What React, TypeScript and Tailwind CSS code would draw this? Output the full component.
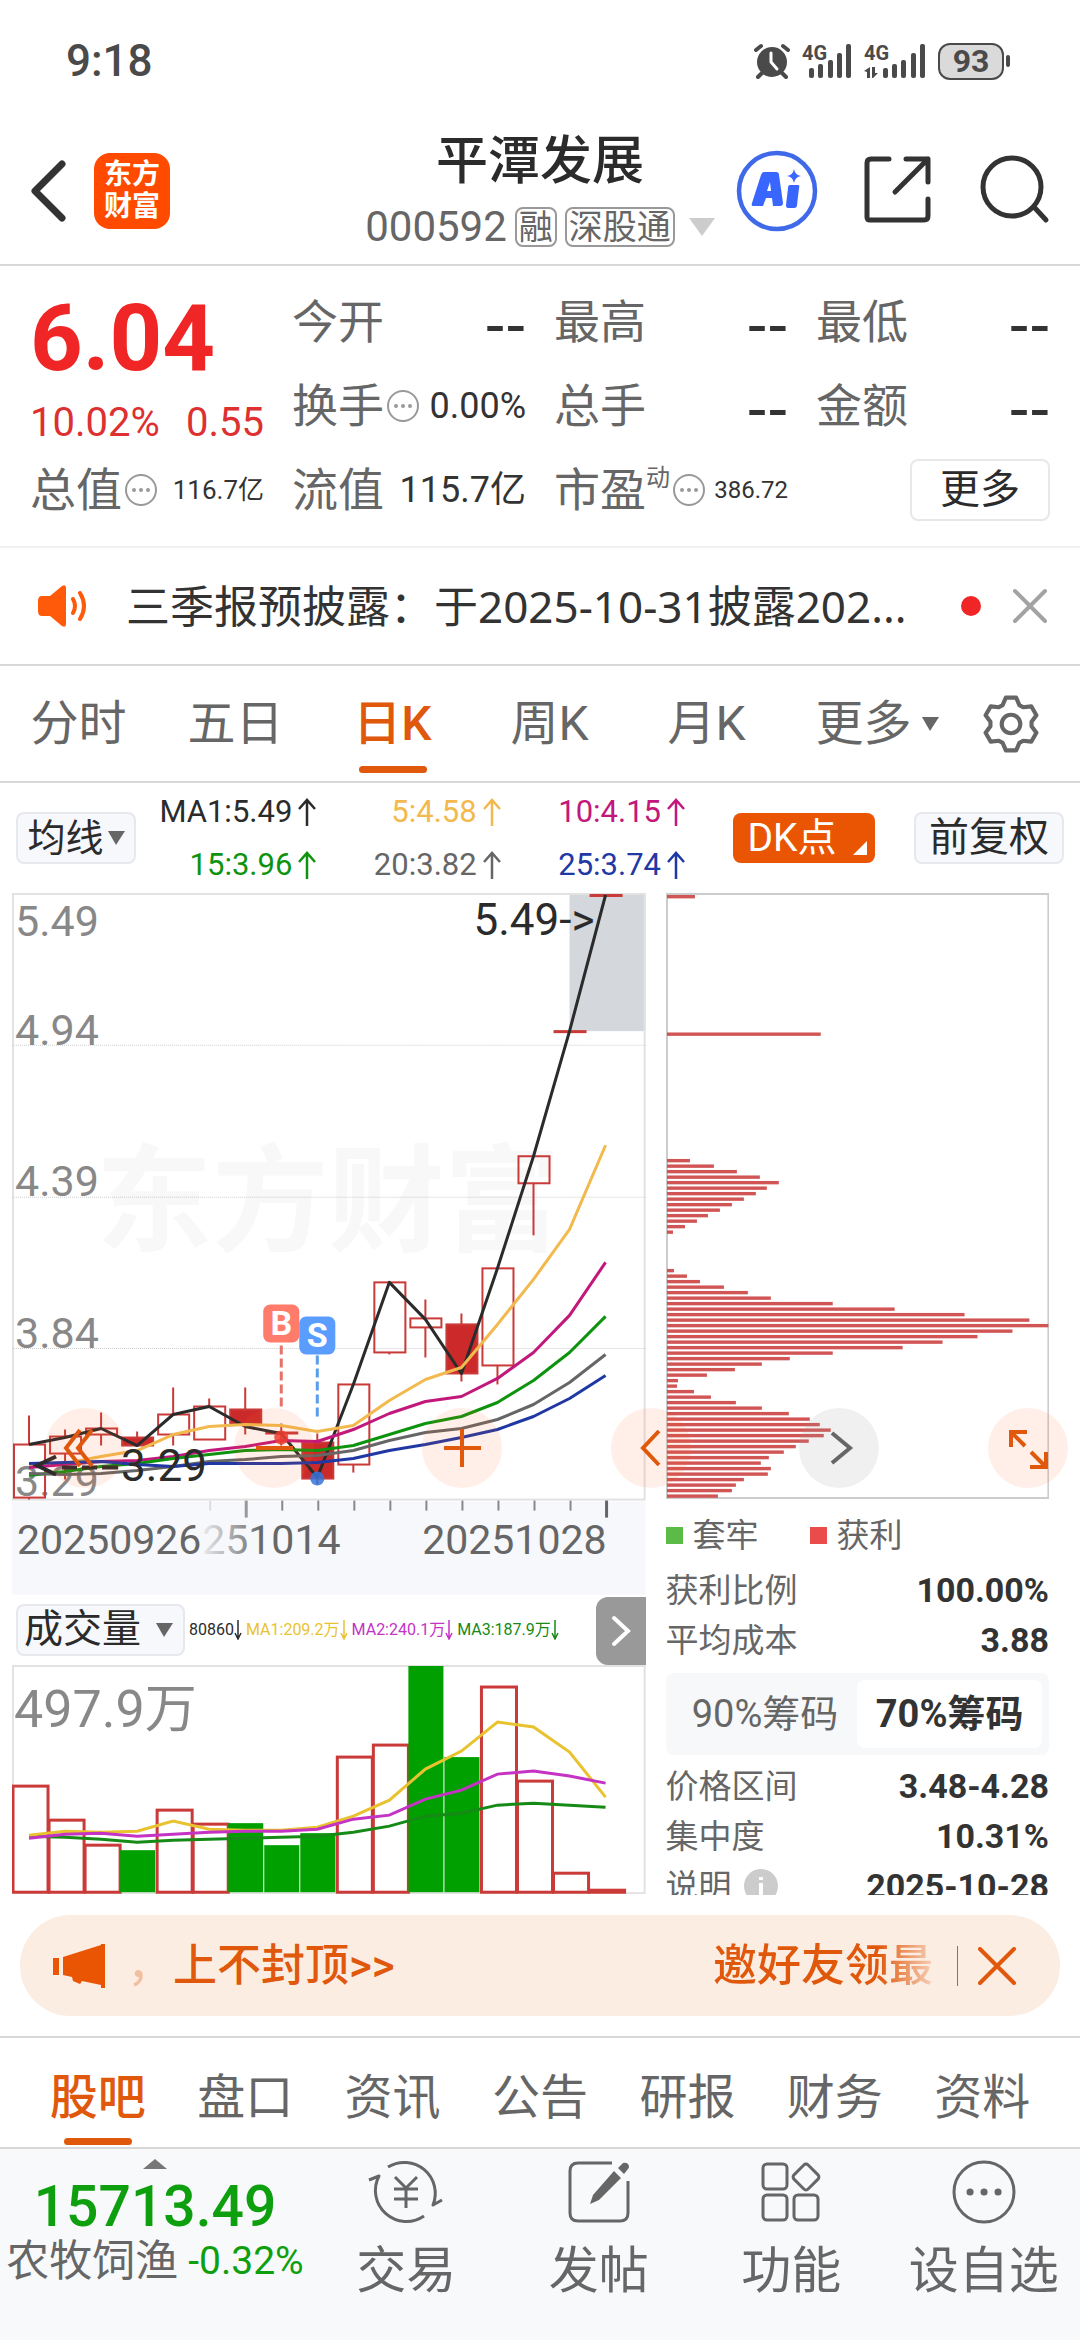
import { ReactNode } from 'react'

const ORANGE = '#ea5504'
const RED = '#c93a38'
const GREEN = '#00a000'

const STEP = 36
const FIRST_X = 29

type Candle = { high: number; top: number; bottom: number; low: number; solid?: boolean }

const candles: Candle[] = [
  { high: 1415, top: 1444, bottom: 1497, low: 1499 },
  { high: 1429, top: 1436, bottom: 1453, low: 1479 },
  { high: 1412, top: 1428, bottom: 1434, low: 1445 },
  { high: 1431, top: 1437, bottom: 1445, low: 1445, solid: true },
  { high: 1387, top: 1414, bottom: 1434, low: 1445 },
  { high: 1398, top: 1406, bottom: 1439, low: 1439 },
  { high: 1387, top: 1409, bottom: 1424, low: 1434, solid: true },
  { high: 1423, top: 1432, bottom: 1433, low: 1445, solid: true },
  { high: 1433, top: 1442, bottom: 1478, low: 1484, solid: true },
  { high: 1384, top: 1384, bottom: 1464, low: 1472 },
  { high: 1282, top: 1282, bottom: 1352, low: 1354 },
  { high: 1299, top: 1318, bottom: 1327, low: 1357 },
  { high: 1313, top: 1324, bottom: 1373, low: 1381, solid: true },
  { high: 1268, top: 1268, bottom: 1365, low: 1384 },
  { high: 1156, top: 1156, bottom: 1183, low: 1235 },
  { high: 1031, top: 1031, bottom: 1032, low: 1032, solid: true },
  { high: 895, top: 895, bottom: 896, low: 896, solid: true },
]

const priceLines = [
  { color: '#2b2b2b', ys: [1444, 1437, 1428, 1445, 1414, 1406, 1426, 1433, 1477, 1384, 1282, 1319, 1373, 1268, 1156, 1031, 895] },
  { color: '#f2ba4e', ys: [1466, 1463, 1456, 1450, 1434, 1426, 1424, 1425, 1431, 1425, 1400, 1379, 1367, 1324, 1279, 1229, 1145] },
  { color: '#c2187b', ys: [1467, 1464, 1461, 1460, 1456, 1450, 1446, 1440, 1441, 1429, 1413, 1401, 1396, 1378, 1352, 1315, 1262] },
  { color: '#0e930e', ys: [1475, 1471, 1466, 1463, 1458, 1454, 1450, 1449, 1450, 1445, 1434, 1423, 1416, 1402, 1380, 1352, 1316] },
  { color: '#666666', ys: [1473, 1474, 1473, 1470, 1466, 1461, 1459, 1456, 1455, 1450, 1440, 1432, 1428, 1419, 1404, 1382, 1354] },
  { color: '#2038a4', ys: [1463, 1462, 1461, 1464, 1466, 1463, 1463, 1463, 1462, 1458, 1450, 1444, 1437, 1429, 1416, 1398, 1375] },
]

const volumes: { top: number; down?: boolean }[] = [
  { top: 1785 }, { top: 1819 }, { top: 1844 }, { top: 1849, down: true }, { top: 1809 }, { top: 1823 },
  { top: 1822, down: true }, { top: 1844, down: true }, { top: 1832, down: true }, { top: 1756 }, { top: 1744 },
  { top: 1665, down: true }, { top: 1756, down: true }, { top: 1686 }, { top: 1780 }, { top: 1872 }, { top: 1889 },
]

const volumeLines = [
  { color: '#168a16', ys: [1835, 1836, 1838, 1841, 1839, 1838, 1837, 1836, 1835, 1831, 1825, 1815, 1812, 1804, 1802, 1804, 1806] },
  { color: '#e9c22f', ys: [1834, 1830, 1831, 1830, 1820, 1828, 1829, 1829, 1826, 1815, 1799, 1768, 1750, 1721, 1726, 1751, 1796] },
  { color: '#c433c4', ys: [1837, 1833, 1832, 1835, 1833, 1831, 1830, 1830, 1828, 1818, 1814, 1798, 1789, 1773, 1770, 1775, 1782] },
]

// [first price level, bar lengths from that level down]
const chips: [number, number[]][] = [
  [0, [28]],
  [25, [154]],
  [48, [23, 47, 70, 93, 112, 100, 89, 77, 65, 53, 41, 30, 18, 6]],
  [68, [
    7, 20, 33, 57, 81, 104, 166, 228, 298, 363, 382, 346, 311, 276, 236, 166, 123, 95, 68, 40, 11,
    10, 27, 44, 69, 95, 122, 143, 153, 164, 157, 142, 129, 117, 102, 94, 104, 101, 77, 69, 65, 51,
  ]],
]

const xAt = (i: number): number => FIRST_X + i * STEP
const toPoints = (ys: number[]): string => ys.map((y, i) => `${xAt(i)},${y}`).join(' ')

const gearPath = (): string => {
  const points: string[] = []
  for (let i = 0; i < 6; i++) {
    const spots = [[-24, 20], [-11, 26], [11, 26], [24, 20]]
    spots.forEach(([deg, r]) => {
      const a = ((i * 60 + deg - 90) * Math.PI) / 180
      points.push(`${(30 + r * Math.cos(a)).toFixed(1)} ${(30 + r * Math.sin(a)).toFixed(1)}`)
    })
  }
  return `M${points.join('L')}Z`
}

const StatusBar = () => (
  <div className="flex h-[118px] items-center justify-between pt-1 pr-[70px] pl-[66px] text-[#4a4a4a]">
    <span className="text-[44px] leading-none font-medium">9:18</span>
    <div className="flex items-center">
      <svg className="mr-3 h-9 w-9" viewBox="0 0 36 36" fill="none" stroke="#4a4a4a" strokeWidth="4" strokeLinecap="round">
        <circle cx="18" cy="19" r="15" fill="#4a4a4a" stroke="none" />
        <path d="M2 7l5-4M34 7l-5-4M8 30l-4 4M28 30l4 4" />
        <path d="M17 10v9l6 7" stroke="#fff" strokeWidth="3" />
      </svg>
      <svg className="mr-3 h-11 w-[50px]" viewBox="0 -4 50 44" fill="#4a4a4a">
        <text x="0" y="17" fontSize="20" fontWeight="700">4G</text>
        <rect x="7" y="25" width="5" height="10" rx="2" />
        <rect x="16" y="21" width="5" height="14" rx="2" />
        <rect x="26" y="17" width="5" height="18" rx="2" />
        <rect x="35" y="10" width="5" height="25" rx="2" />
        <rect x="44" y="1" width="5" height="34" rx="2" />
      </svg>
      <svg className="mr-3 h-11 w-[62px]" viewBox="0 -4 62 44" fill="#4a4a4a">
        <text x="0" y="17" fontSize="20" fontWeight="700">4G</text>
        <path d="M0 28l6-4v11H3v-6zM8 24h3v6h3l-5 5H8z" />
        <rect x="19" y="25" width="5" height="10" rx="2" />
        <rect x="28" y="21" width="5" height="14" rx="2" />
        <rect x="37" y="17" width="5" height="18" rx="2" />
        <rect x="47" y="10" width="5" height="25" rx="2" />
        <rect x="56" y="1" width="5" height="34" rx="2" />
      </svg>
      <div className="flex h-[37px] w-[66px] items-center justify-center rounded-xl border-2 border-[#4a4a4a] bg-[#dadada] text-[32px] leading-none font-bold">
        93
      </div>
      <div className="ml-0.5 h-3 w-1 rounded-full bg-[#4a4a4a]" />
    </div>
  </div>
)

const Header = () => (
  <header className="grid h-[148px] grid-cols-[1fr_auto_1fr] items-center border-b-2 border-[#d8d8d8]">
    <div className="flex items-center pl-[30px]">
      <button aria-label="返回">
        <svg className="h-[64px] w-9" viewBox="0 0 36 64" fill="none" stroke="#333" strokeWidth="7" strokeLinejoin="round" strokeLinecap="round">
          <path d="M32 5L5 32l27 27" />
        </svg>
      </button>
      <div className="ml-7 flex h-[76px] w-[76px] flex-col items-center justify-center rounded-2xl bg-[#ff4a00] text-[28px] leading-8 font-bold text-white">
        <span>东方</span>
        <span>财富</span>
      </div>
    </div>
    <div className="flex flex-col items-center">
      <h1 className="text-[52px] leading-[72px] font-medium text-[#2b2b2b]">平潭发展</h1>
      <div className="flex h-[58px] items-center text-[42px] leading-none text-[#666]">
        000592
        <span className="ml-2 rounded-lg border-2 border-[#999] px-0.5 text-[34px] leading-9">融</span>
        <span className="ml-2 rounded-lg border-2 border-[#999] px-0.5 text-[34px] leading-9">深股通</span>
        <svg className="ml-3.5 h-[18px] w-[26px]" viewBox="0 0 26 18"><path d="M0 0h26L13 18z" fill="#ccc" /></svg>
      </div>
    </div>
    <div className="flex items-center justify-end pr-[30px]">
      <button aria-label="AI">
        <svg className="h-[82px] w-[82px]" viewBox="0 0 82 82">
          <circle cx="41" cy="41" r="38" fill="none" stroke="#3f69e8" strokeWidth="4.5" />
          <path d="M28 22h12q3 0 3 3l4 28q0 3-3 3h-7l-1-8h-6l-3 8h-10q-2 0-1-3l9-28q1-3 3-3zM34 32l-3 9h4z" fill="#3866ff" fillRule="evenodd" />
          <path d="M54 35h8q2 0 1 3l-2 17q0 3-3 3h-6q-2 0-2-3l2-17q0-3 2-3z" fill="#3866ff" />
          <path d="M58 19q1 6 7 7-6 1-7 7-1-6-7-7 6-1 7-7z" fill="#3866ff" />
        </svg>
      </button>
      <button aria-label="分享" className="ml-11">
        <svg className="h-[72px] w-[72px]" viewBox="0 0 72 72" fill="none" stroke="#333" strokeWidth="5" strokeLinecap="round" strokeLinejoin="round">
          <path d="M27 4H9q-4 0-4 4v54q0 3 3 3h54q4 0 4-4V44M44 4h22v23M66 4L33 37" />
        </svg>
      </button>
      <button aria-label="搜索" className="ml-11">
        <svg className="h-[72px] w-[72px]" viewBox="0 0 72 72" fill="none" stroke="#333" strokeWidth="5" strokeLinecap="round">
          <circle cx="34" cy="32" r="29" />
          <path d="M56 52l12 13" />
        </svg>
      </button>
    </div>
  </header>
)

const InfoDots = () => (
  <svg className="ml-0.5 h-[34px] w-[34px] shrink-0" viewBox="0 0 34 34" fill="#999">
    <circle cx="17" cy="17" r="15" fill="none" stroke="#999" strokeWidth="2" />
    <circle cx="10" cy="17" r="2" />
    <circle cx="17" cy="17" r="2" />
    <circle cx="24" cy="17" r="2" />
  </svg>
)

const Quote = ({ label, info, children }: { label: ReactNode; info?: boolean; children: ReactNode }) => (
  <div className="flex h-[84px] items-center leading-none whitespace-nowrap">
    <span className="text-[46px] text-[#666]">{label}</span>
    {info && <InfoDots />}
    <span className="ml-auto text-[#333]">{children}</span>
  </div>
)

const Empty = () => <span className="font-['Noto_Sans'] text-[64px] leading-none">--</span>

const Quotes = () => (
  <section className="grid grid-cols-4 gap-x-7 border-b-2 border-[#f0f0f0] px-[30px] py-3.5">
    <div className="row-span-2 whitespace-nowrap text-[#f02626]">
      <div className="flex h-[118px] items-center text-[92px] leading-none font-bold">6.04</div>
      <div className="flex h-[50px] items-center justify-between text-[40px] leading-none text-[#dd3030]">
        <span>10.02%</span>
        <span>0.55</span>
      </div>
    </div>
    <Quote label="今开"><Empty /></Quote>
    <Quote label="最高"><Empty /></Quote>
    <Quote label="最低"><Empty /></Quote>
    <Quote label="换手" info><span className="text-[36px]">0.00%</span></Quote>
    <Quote label="总手"><Empty /></Quote>
    <Quote label="金额"><Empty /></Quote>
    <Quote label="总值" info><span className="text-[26px]">116.7亿</span></Quote>
    <Quote label="流值"><span className="text-[36px]">115.7亿</span></Quote>
    <Quote label={<>市盈<sup className="-top-5 text-[24px] leading-none">动</sup></>} info>
      <span className="text-[24px]">386.72</span>
    </Quote>
    <div className="flex h-[84px] items-center justify-end">
      <button className="h-[62px] w-[140px] rounded-lg border-2 border-[#e8e8e8] text-[40px] leading-none text-[#2b2b2b]">更多</button>
    </div>
  </section>
)

const Notice = () => (
  <section className="flex h-[118px] items-center border-b-2 border-[#d8d8d8] pr-[32px] pl-[38px]">
    <svg className="h-11 w-[52px]" viewBox="0 0 52 44" fill="none" stroke="#ff5a0a" strokeWidth="4" strokeLinecap="round">
      <path d="M4 12h8L24 2q4-2 4 2v36q0 4-4 2L12 32H4q-4 0-4-5V17q0-5 4-5z" fill="#ff5a0a" stroke="none" />
      <path d="M35 15q4 7 0 14M42 9q8 13 0 26" />
    </svg>
    <p className="ml-[36px] flex-1 overflow-hidden font-['Noto_Sans','Noto_Sans_CJK_SC',sans-serif] text-[44px] leading-[60px] whitespace-nowrap text-[#333]">
      三季报预披露：于2025-10-31披露202...
    </p>
    <span className="mr-[31px] h-5 w-5 rounded-full bg-[#f02626]" />
    <button aria-label="关闭公告">
      <svg className="h-9 w-9" viewBox="0 0 36 36" stroke="#a3a3a3" strokeWidth="4" strokeLinecap="round"><path d="M3 3l30 30M33 3L3 33" /></svg>
    </button>
  </section>
)

const PeriodTabs = () => (
  <nav className="flex h-[117px] items-center border-b-2 border-[#d8d8d8] text-[48px] leading-none text-[#666]">
    {['分时', '五日', '日K', '周K', '月K'].map((name) => (
      <button key={name} className={`relative flex h-full flex-1 items-center justify-center ${name === '日K' ? 'font-medium text-[#e0580c]' : ''}`}>
        {name}
        {name === '日K' && <span className="absolute bottom-2 h-[7px] w-[68px] rounded-full bg-[#e0580c]" />}
      </button>
    ))}
    <button className="flex h-full w-[184px] items-center justify-center">
      更多
      <svg className="ml-2.5 h-[14px] w-[17px]" viewBox="0 0 17 14"><path d="M0 0h17L8 14z" fill="#666" /></svg>
    </button>
    <button aria-label="设置" className="mr-[27px] flex w-[84px] justify-center">
      <svg className="h-[62px] w-[62px]" viewBox="0 0 60 60" fill="none" stroke="#666" strokeWidth="4" strokeLinejoin="round">
        <path d={gearPath()} />
        <circle cx="30" cy="30" r="9" />
      </svg>
    </button>
  </nav>
)

const MaValue = ({ text, className }: { text: string; className: string }) => (
  <span className={`flex h-[53px] items-center justify-end ${className}`}>
    {text}
    <svg className="ml-1.5 h-7 w-[18px]" viewBox="0 0 18 28" fill="none" stroke="currentColor" strokeWidth="2.5"><path d="M9 28V2M1 11l8-9 8 9" /></svg>
  </span>
)

const Indicators = () => (
  <section className="flex h-[110px] items-center px-4">
    <button className="flex h-[52px] w-[120px] items-center justify-center rounded-lg border-2 border-[#e6e8ee] bg-[#f7f8fb] text-[38px] leading-none text-[#2b2b2b]">
      均线
      <svg className="ml-1 h-[14px] w-[17px]" viewBox="0 0 17 14"><path d="M0 0h17L8 14z" fill="#666" /></svg>
    </button>
    <div className="grid flex-1 grid-cols-[180fr_184fr_184fr] text-[31px] leading-none whitespace-nowrap">
      <MaValue text="MA1:5.49" className="text-[#2b2b2b]" />
      <MaValue text="5:4.58" className="text-[#f2ba4e]" />
      <MaValue text="10:4.15" className="text-[#c2187b]" />
      <MaValue text="15:3.96" className="text-[#0e930e]" />
      <MaValue text="20:3.82" className="text-[#666]" />
      <MaValue text="25:3.74" className="text-[#2038a4]" />
    </div>
    <button className="relative ml-[48px] h-[50px] w-[142px] rounded-lg bg-[#ea5504] pr-6 text-[39px] leading-none text-white">
      DK点
      <svg className="absolute right-2 bottom-2 h-3.5 w-3.5" viewBox="0 0 14 14"><path d="M14 0v14H0z" fill="#fff" /></svg>
    </button>
    <button className="ml-[39px] h-[52px] w-[150px] rounded-lg border-2 border-[#e6e8ee] bg-[#f7f8fb] text-[40px] leading-none whitespace-nowrap text-[#2b2b2b]">前复权</button>
  </section>
)

const PriceChart = () => (
  <svg className="block h-auto w-full" viewBox="12 893 633 701">
    <defs>
      <linearGradient id="dateFade" gradientUnits="userSpaceOnUse" x1="203" x2="262" y1="0" y2="0">
        <stop offset="0" stopColor="#666" stopOpacity="0.1" />
        <stop offset="1" stopColor="#666" />
      </linearGradient>
    </defs>
    <text x="96" y="1242" fontSize="116" fontWeight="700" fill="#f8f8f8">东方财富</text>
    <rect x="569" y="894" width="76" height="137" fill="#d4d7dc" />
    <rect x="13" y="894" width="631" height="605" fill="none" stroke="#e2e2e2" strokeWidth="2" />
    {[1045, 1197, 1348].map((y) => (
      <path key={y} d={`M12 ${y}H645`} stroke="#ccc" strokeDasharray="1 1" />
    ))}
    <g fontSize="43" fill="#888">
      <text x="15" y="936">5.49</text>
      <text x="15" y="1045">4.94</text>
      <text x="15" y="1196">4.39</text>
      <text x="15" y="1348">3.84</text>
      <text x="15" y="1495">3.29</text>
    </g>
    {candles.map((c, i) => (
      <g key={i} stroke={RED} strokeWidth="2">
        <path d={`M${xAt(i)} ${c.high}V${c.top}M${xAt(i)} ${c.bottom}V${c.low}`} />
        <rect x={xAt(i) - 15} y={c.top} width="31" height={c.bottom - c.top} fill={c.solid ? '#cc2a2a' : 'none'} />
      </g>
    ))}
    {priceLines.map((line) => (
      <polyline key={line.color} points={toPoints(line.ys)} fill="none" stroke={line.color} strokeWidth="3" strokeLinejoin="round" />
    ))}
    <path d="M281 1345v65" stroke="#e57368" strokeWidth="3" strokeDasharray="9 4" />
    <path d="M317 1355v65" stroke="#5a9dea" strokeWidth="3" strokeDasharray="9 4" />
    <circle cx="281" cy="1437" r="7" fill="#ee3a30" fillOpacity="0.85" />
    <circle cx="317" cy="1478" r="7" fill="#3574dc" fillOpacity="0.85" />
    <rect x="263" y="1304" width="36" height="38" rx="7" fill="#ff7b6c" />
    <rect x="299" y="1316" width="36" height="38" rx="7" fill="#5a9dff" />
    <g fontSize="34" fontWeight="700" fill="#fff" textAnchor="middle">
      <text x="281" y="1335">B</text>
      <text x="317" y="1347">S</text>
    </g>
    <g fontSize="44" fill="#2b2b2b">
      <text x="473" y="935">5.49-&gt;</text>
      <text x="121" y="1480">3.29</text>
    </g>
    <path d="M56 1456l-19 9 19 9M62 1467h15M82 1467h15M102 1467h16" fill="none" stroke="#2b2b2b" strokeWidth="4" />
    <rect x="12" y="1501" width="633" height="93" fill="#f7f8fb" />
    {[210, 282, 318, 354, 390, 426, 462, 498, 534, 570].map((x) => (
      <path key={x} d={`M${x} 1500v10`} stroke={x === 210 ? '#ddd' : '#888'} strokeWidth="2" />
    ))}
    <path d="M246 1500v17" stroke="#999" strokeWidth="3" />
    <path d="M606 1500v17" stroke="#666" strokeWidth="3" />
    <g fontSize="41" fill="#666">
      <text x="17" y="1553">20250926</text>
      <text x="202" y="1553" fill="url(#dateFade)">251014</text>
      <text x="606" y="1553" textAnchor="end">20251028</text>
    </g>
  </svg>
)

const VolumeChart = () => (
  <svg className="block h-auto w-full" viewBox="12 1664 633 229">
    <rect x="13" y="1665" width="631" height="227" fill="none" stroke="#e2e2e2" strokeWidth="2" />
    <text x="14" y="1726" fontSize="52" fill="#888">497.9万</text>
    {volumes.map((v, i) => (
      <rect
        key={i}
        x={xAt(i) - (v.down ? 17 : 16)}
        y={v.top}
        width="35"
        height={1891 - v.top}
        fill={v.down ? GREEN : 'none'}
        stroke={v.down ? 'none' : RED}
        strokeWidth="3"
      />
    ))}
    {volumeLines.map((line) => (
      <polyline key={line.color} points={toPoints(line.ys)} fill="none" stroke={line.color} strokeWidth="3" />
    ))}
  </svg>
)

const DownArrow = () => (
  <svg className="h-5 w-2" viewBox="0 0 8 20" fill="none" stroke="currentColor" strokeWidth="1.5"><path d="M4 0v19M1 13l3 6 3-6" /></svg>
)

const VolumeHeader = () => (
  <div className="flex h-[70px] items-center pl-1">
    <button className="flex h-[52px] w-[169px] items-center justify-between rounded-lg border-2 border-[#e6e8ee] bg-[#f7f8fb] px-1.5 text-[39px] leading-none text-[#2b2b2b]">
      成交量
      <svg className="mr-1 h-[14px] w-[17px]" viewBox="0 0 17 14"><path d="M0 0h17L8 14z" fill="#666" /></svg>
    </button>
    <div className="ml-1 flex gap-1 text-[16px] leading-6 whitespace-nowrap">
      <span className="flex items-center text-[#2b2b2b]">80860<DownArrow /></span>
      <span className="flex items-center text-[#e9c22f]">MA1:209.2万<DownArrow /></span>
      <span className="flex items-center text-[#c433c4]">MA2:240.1万<DownArrow /></span>
      <span className="flex items-center text-[#168a16]">MA3:187.9万<DownArrow /></span>
    </div>
    <button aria-label="下一个指标" className="ml-auto flex h-[68px] w-[50px] items-center justify-center self-end rounded-l-xl bg-[#999]">
      <svg className="h-8 w-5" viewBox="0 0 20 32" fill="none" stroke="#fff" strokeWidth="4" strokeLinecap="round"><path d="M3 3l14 13L3 29" /></svg>
    </button>
  </div>
)

const ChipChart = () => (
  <svg className="block h-auto w-full" viewBox="665 893 384 607">
    <rect x="666" y="894" width="382" height="605" fill="none" stroke="#ccc" strokeWidth="2" />
    {chips.map(([start, lengths]) =>
      lengths.map((length, i) => (
        <rect key={start + i} x="666" y={895 + (start + i) * 5.508} width={length} height="3.4" fill="#d25555" />
      ))
    )}
  </svg>
)

const ChipRow = ({ label, value }: { label: ReactNode; value: string }) => (
  <div className="flex h-[50px] items-center justify-between leading-none">
    <dt className="flex items-center text-[33px] text-[#666]">{label}</dt>
    <dd className="text-[34px] font-bold text-[#333]">{value}</dd>
  </div>
)

const ChipStats = () => (
  <div>
    <div className="flex h-[66px] items-center pt-1.5 text-[33px] leading-none text-[#666]">
      <span className="mr-2.5 h-[17px] w-[17px] bg-[#5cba47]" />
      套牢
      <span className="mr-2.5 ml-[51px] h-[17px] w-[17px] bg-[#ea4b4b]" />
      获利
    </div>
    <dl>
      <ChipRow label="获利比例" value="100.00%" />
      <ChipRow label="平均成本" value="3.88" />
    </dl>
    <div className="mt-2 mb-1.5 flex h-[82px] rounded-lg bg-[#f7f8fa] p-[7px] text-[38px] leading-none">
      <button className="flex-1 text-[#666]">90%筹码</button>
      <button className="flex-1 rounded-lg bg-white font-bold text-[#333]">70%筹码</button>
    </div>
    <dl>
      <ChipRow label="价格区间" value="3.48-4.28" />
      <ChipRow label="集中度" value="10.31%" />
      <div className="h-[34px] overflow-hidden">
        <ChipRow
          label={
            <>
              说明
              <svg className="ml-3 h-[34px] w-[34px]" viewBox="0 0 34 34">
                <circle cx="17" cy="17" r="17" fill="#ccc" />
                <path d="M17 14v12M17 8v3" stroke="#fff" strokeWidth="4" />
              </svg>
            </>
          }
          value="2025-10-28"
        />
      </div>
    </dl>
  </div>
)

const chartTools = [
  { name: '最早', icon: <path d="M35 22L21 40l14 18M47 22L33 40l14 18" /> },
  { name: '缩小', icon: <path d="M22 40h37" /> },
  { name: '放大', icon: <path d="M22 40h37M40 21v38" /> },
  { name: '左移', icon: <path d="M48 23L32 40l16 17" /> },
  { name: '右移', icon: <path d="M33 25l18 15-18 15" />, gray: true },
  { name: '全屏', icon: <path d="M37 38L23 24M23 39V24h16M43 44l15 15M58 44v15H42" /> },
]

const Charts = () => (
  <section className="relative grid grid-cols-[633fr_383fr] items-start gap-x-5 pr-[31px] pl-3">
    <div>
      <PriceChart />
      <VolumeHeader />
      <VolumeChart />
    </div>
    <div className="min-w-0">
      <ChipChart />
      <ChipStats />
    </div>
    <div className="absolute top-[515px] right-3 left-[45px] flex justify-between">
      {chartTools.map((tool) => (
        <button key={tool.name} aria-label={tool.name} className={`h-20 w-20 rounded-full ${tool.gray ? 'bg-[#999]/15' : 'bg-[#ff6420]/10'}`}>
          <svg viewBox="0 0 80 80" fill="none" stroke={tool.gray ? '#666' : '#e0580c'} strokeWidth="4">{tool.icon}</svg>
        </button>
      ))}
    </div>
  </section>
)

const Promo = () => (
  <section className="mx-5 mt-5 flex h-[101px] items-center rounded-full bg-[#fcede3] pr-11 pl-[33px] text-[44px] leading-none font-medium whitespace-nowrap text-[#e0580c]">
    <svg className="h-11 w-[54px]" viewBox="0 0 54 44" fill={ORANGE}>
      <path d="M0 14h6v17H0zM10 13L48 1V0h4v44h-4v-3l-19-4-2 3-7-3-1-4-9-2z" />
    </svg>
    <span className="ml-[20px] w-[46px] opacity-30">，</span>
    <span>上不封顶&gt;&gt;</span>
    <span className="ml-auto bg-linear-to-r from-[#e0580c] from-75% to-[#e0580c]/20 bg-clip-text py-2 text-transparent">邀好友领最</span>
    <span className="mr-5 ml-6 h-10 w-px bg-[#e0580c]" />
    <button aria-label="关闭活动">
      <svg className="h-[38px] w-[38px]" viewBox="0 0 38 38" stroke="#e0580c" strokeWidth="4" strokeLinecap="round"><path d="M2 2l34 34M36 2L2 36" /></svg>
    </button>
  </section>
)

const ContentTabs = () => (
  <nav className="mt-5 flex h-[113px] border-y-2 border-[#d8d8d8] px-6 text-[48px] leading-none text-[#666]">
    {['股吧', '盘口', '资讯', '公告', '研报', '财务', '资料'].map((name, i) => (
      <button key={name} className={`relative flex flex-1 items-center justify-center pt-2.5 whitespace-nowrap ${i === 0 ? 'font-medium text-[#e0580c]' : ''}`}>
        {name}
        {i === 0 && <span className="absolute bottom-0.5 h-[7px] w-[68px] rounded-full bg-[#e0580c]" />}
      </button>
    ))}
  </nav>
)

const actions = [
  {
    name: '交易',
    icon: (
      <>
        <path d="M19 8A31 31 0 0 1 64 46l9-5M55 57A31 31 0 0 1 10 17L0 21" />
        <path d="M26 18l11 11 11-11M25 30h24M25 40h24M37 29v20" />
      </>
    ),
  },
  {
    name: '发帖',
    icon: (
      <>
        <path d="M50 4H16q-8 0-8 8v42q0 8 8 8h42q8 0 8-8V22" />
        <path d="M52 12l7 7-22 22-9 4 3-9zM56 9l5-5q3-1 5 1 2 3 0 5l-4 5z" fill="#666" stroke="none" />
      </>
    ),
  },
  {
    name: '功能',
    icon: (
      <>
        <rect x="9" y="5" width="24" height="25" rx="4" />
        <rect x="9" y="36" width="24" height="25" rx="4" />
        <rect x="40" y="36" width="24" height="25" rx="4" />
        <rect x="42" y="8" width="20" height="20" rx="3" transform="rotate(45 52 18)" />
      </>
    ),
  },
  {
    name: '设自选',
    icon: (
      <>
        <circle cx="37" cy="33" r="30" />
        <path d="M23 33h.1M37 33h.1M51 33h.1" strokeWidth="7" strokeLinecap="round" />
      </>
    ),
  },
]

const BottomBar = () => (
  <footer className="flex bg-[#f7f9fb] pb-2">
    <div className="flex w-[310px] flex-col items-center pt-2.5 whitespace-nowrap">
      <svg className="h-2.5 w-6" viewBox="0 0 24 10"><path d="M0 10L12 0l12 10z" fill="#777" /></svg>
      <span className="mt-1.5 text-[57px] leading-[64px] font-medium text-[#0e9f0e]">15713.49</span>
      <span className="flex h-11 items-center text-[43px] leading-none text-[#666]">
        农牧饲渔<span className="ml-2.5 text-[39px] text-[#0e9f0e]">-0.32%</span>
      </span>
    </div>
    {actions.map((action) => (
      <button key={action.name} className="flex flex-1 flex-col items-center pt-2.5 text-[50px] leading-[72px] whitespace-nowrap text-[#666]">
        <svg className="h-[66px] w-[74px] overflow-visible" viewBox="0 0 74 66" fill="none" stroke="#666" strokeWidth="3" strokeLinejoin="round">{action.icon}</svg>
        <span className="mt-2.5">{action.name}</span>
      </button>
    ))}
  </footer>
)

const App = (): JSX.Element => {
  return (
    <div className="flex min-h-screen flex-col bg-[#f7f9fb] font-['Roboto','Noto_Sans_CJK_SC',sans-serif]">
      <main className="bg-white">
        <StatusBar />
        <Header />
        <Quotes />
        <Notice />
        <PeriodTabs />
        <Indicators />
        <Charts />
        <Promo />
        <ContentTabs />
      </main>
      <BottomBar />
    </div>
  )
}

export default App
